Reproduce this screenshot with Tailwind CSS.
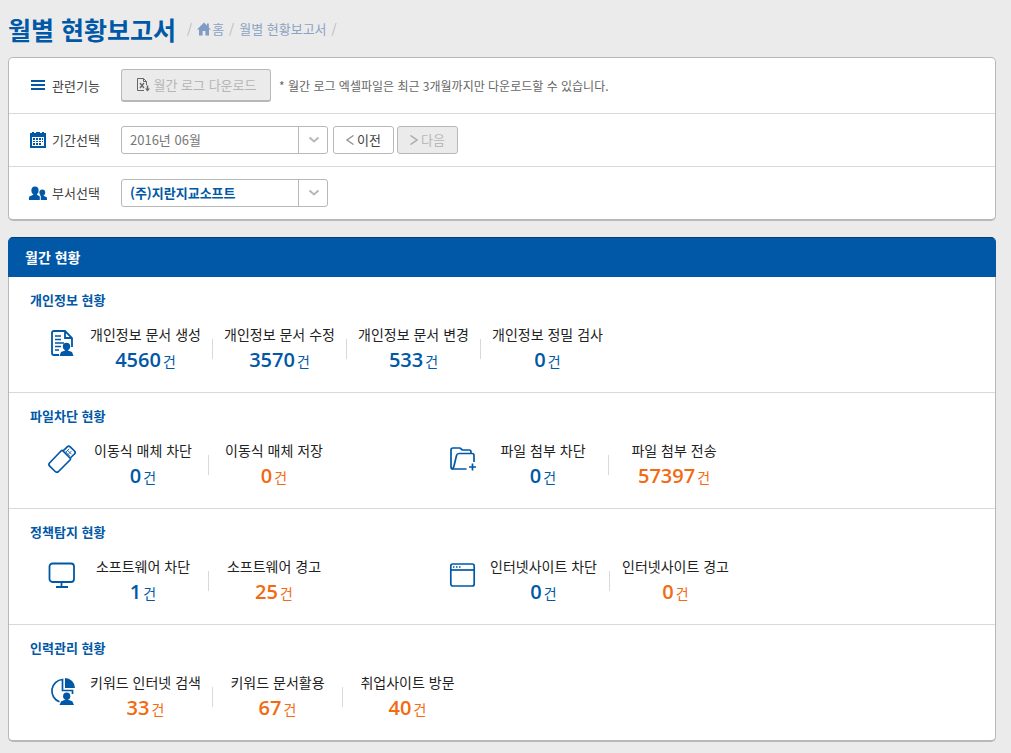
<!DOCTYPE html>
<html lang="ko">
<head>
<meta charset="utf-8">
<meta name="viewport" content="width=device-width, initial-scale=1">
<title>월별 현황보고서</title>
<script src="https://cdn.jsdelivr.net/npm/@tailwindcss/browser@4"></script>
</head>
<body class="min-h-screen bg-[#ebebeb] px-2 pb-2.5 font-['Noto_Sans_CJK_KR','Noto_Sans',sans-serif] text-[13px] leading-5 text-[#444]">
<div class="mr-[7px]">
<header class="flex h-[57px] items-center">
  <h1 class="text-[25px] leading-8 font-bold whitespace-nowrap text-[#0058a6]">월별 현황보고서</h1>
  <nav aria-label="현재 위치" class="ml-[11px] flex items-center gap-[5px] whitespace-nowrap text-[#8ba3c4]">
    <span class="text-[#b8b8b8]">/</span>
    <a href="#" class="flex items-center gap-px">
      <svg class="h-3.5 w-3.5" viewBox="0 0 14 14" fill="#7f9cc4"><path d="M7 0.5 0 7.6h2V13.5h3.6V9h2.8v4.5H12V7.600h2L11.800 5.400V1.500H10v2z"/></svg>
      <span>홈</span>
    </a>
    <span class="text-[#b8b8b8]">/</span>
    <a href="#">월별 현황보고서</a>
    <span class="text-[#b8b8b8]">/</span>
  </nav>
</header>

<main>
<form class="rounded-[5px] border border-b-2 border-[#b8b8b8] bg-white">
  <div class="flex h-14 items-center border-b border-[#d9d9d9] pl-5">
    <div class="flex w-[92px] items-center gap-[5px]">
      <svg class="h-[18px] w-[18px]" viewBox="0 0 18 18" fill="#0058a6"><path d="M2 3h14v2H2zM2 7h14v2H2zM2 11h14v2H2z"/></svg>
      <span>관련기능</span>
    </div>
    <button type="button" disabled class="flex h-[33px] w-[150px] items-center justify-center gap-1 rounded-[3px] border border-b-2 border-[#b8b8b8] bg-[#ebebeb] whitespace-nowrap text-[#b5b5b5]">
      <svg class="h-3.5 w-3.5" viewBox="0 0 14 14" fill="none" stroke="#666"><path d="M8 12.500H1.500V.5h6l3 3V7M7.500.5v3h3"/><path d="m4 5 4 5M8 5 4 10" stroke-width="1.300"/><path d="M11.500 7.500v4" stroke-width="1.600"/><path d="M9 10.500h5l-2.500 3z" fill="#666" stroke="none"/></svg>
      월간 로그 다운로드
    </button>
    <p class="ml-2 text-xs whitespace-nowrap text-[#666]">* 월간 로그 엑셀파일은 최근 3개월까지만 다운로드할 수 있습니다.</p>
  </div>

  <div class="flex h-[53px] items-center border-b border-[#d9d9d9] pl-5">
    <label for="period" class="flex w-[92px] items-center gap-[5px]">
      <svg class="h-[18px] w-[18px]" viewBox="0 0 18 18"><path fill="#0058a6" d="M1 2h2V1h2v1h2V1h4v1h2V1h2v1h2v15H1z"/><path fill="#fff" d="M3 6h12v9H3z"/><path fill="#0058a6" d="M4 7h2v2H4zM7 7h2v2H7zM10 7h2v2h-2zM4 10h2v1H4zM7 10h2v1H7zM10 10h2v1h-2zM13 7h1v2h-1zM13 10h1v1h-1zM4 12h2v2H4zM7 12h2v2H7zM10 12h2v2h-2z"/></svg>
      <span>기간선택</span>
    </label>
    <div class="relative">
      <select id="period" class="h-7 w-[207px] appearance-none rounded-[3px] border border-[#b8b8b8] bg-white pl-2 text-[#777]"><option>2016년 06월</option></select>
      <span class="pointer-events-none absolute inset-y-0 right-0 flex w-[30px] items-center justify-center border-l border-[#b8b8b8]">
        <svg class="h-2 w-3" viewBox="0 0 12 8" fill="none" stroke="#b8b8b8" stroke-width="2"><path d="m1.500 1.500 4.500 4 4.500-4"/></svg>
      </span>
    </div>
    <button type="button" class="ml-[5px] flex h-7 w-[61px] items-center justify-center gap-[3px] rounded-[3px] border border-[#b8b8b8] bg-white">
      <svg class="h-2.5 w-2" viewBox="0 0 8 10" fill="none" stroke="#999" stroke-width="1.500"><path d="M7.500.5 1 5l6.500 4.500"/></svg>이전
    </button>
    <button type="button" disabled class="ml-[3px] flex h-7 w-[61px] items-center justify-center gap-[3px] rounded-[3px] border border-[#b8b8b8] bg-[#ebebeb] text-[#b8b8b8]">
      <svg class="h-2.5 w-2" viewBox="0 0 8 10" fill="none" stroke="#aaa" stroke-width="1.500"><path d="M.5.5 7 5 .5 9.500"/></svg>다음
    </button>
  </div>

  <div class="flex h-[52px] items-center pl-5">
    <label for="dept" class="flex w-[92px] items-center gap-[5px]">
      <svg class="h-[18px] w-[18px]" viewBox="0 0 18 18" fill="#0058a6"><ellipse cx="6" cy="6.500" rx="3.600" ry="4"/><path d="M4.200 9h3.600v1.600l3 1.800V16H0v-3.200l4.200-2z"/><circle cx="13.300" cy="8.500" r="2.900"/><path d="M12.200 10.500h2.400v1.300l3.400 1.700V16h-6.200v-3.800l-.7-.7z"/></svg>
      <span>부서선택</span>
    </label>
    <div class="relative">
      <select id="dept" class="h-7 w-[207px] appearance-none rounded-[3px] border border-[#b8b8b8] bg-white pl-2 font-bold text-[#0058a6]"><option>(주)지란지교소프트</option></select>
      <span class="pointer-events-none absolute inset-y-0 right-0 flex w-[30px] items-center justify-center border-l border-[#b8b8b8]">
        <svg class="h-2 w-3" viewBox="0 0 12 8" fill="none" stroke="#b8b8b8" stroke-width="2"><path d="m1.500 1.500 4.500 4 4.500-4"/></svg>
      </span>
    </div>
  </div>
</form>

<section class="mt-4">
  <h2 class="flex h-10 items-center rounded-t-[5px] border border-b-0 border-[#0058a6] border-t-[#003f7c] bg-[#0058a6] pb-0.5 pl-4 text-sm font-bold text-white">월간 현황</h2>
  <div class="rounded-b-[5px] border border-t-0 border-b-2 border-[#b8b8b8] bg-white text-sm text-[#222]">

    <section class="border-b border-[#d9d9d9] pt-[13px] pb-[18px]">
      <h3 class="pl-[21px] text-[13px] leading-5 font-bold text-[#0058a6]">개인정보 현황</h3>
      <div class="mt-3.5 flex pl-[39px]">
        <div class="flex">
          <svg class="mt-[5px] mr-[3px] h-7 w-7" viewBox="0 0 28 28" fill="none" stroke="#0058a6" stroke-width="2"><path d="M11 26H6q-2 0-2-2V4q0-2 2-2h11l7 7v9M17 2v7h7" stroke-width="1.800"/><path d="M7 7h6M7 10.500h6M7 14h9M7 17.500h6M7 21h4" stroke-width="1.500"/><circle cx="18.500" cy="17.500" r="3.700" fill="#0058a6" stroke="none"/><path d="M17 20h3v1.500l4 1.500 1.500 4h-14l1.500-4 4-1.500z" fill="#0058a6" stroke="none"/></svg>
          <dl class="w-[133px] text-center whitespace-nowrap"><dt>개인정보 문서 생성</dt><dd class="mt-0.5 flex h-7 items-baseline justify-center gap-0.5 text-[#0058a6]"><b class="font-['Open_Sans'] text-xl leading-7 font-semibold">4560</b><span>건</span></dd></dl>
          <div class="mt-[15px] h-5 w-px bg-[#d9d9d9]"></div>
          <dl class="w-[133px] text-center whitespace-nowrap"><dt>개인정보 문서 수정</dt><dd class="mt-0.5 flex h-7 items-baseline justify-center gap-0.5 text-[#0058a6]"><b class="font-['Open_Sans'] text-xl leading-7 font-semibold">3570</b><span>건</span></dd></dl>
          <div class="mt-[15px] h-5 w-px bg-[#d9d9d9]"></div>
          <dl class="w-[133px] text-center whitespace-nowrap"><dt>개인정보 문서 변경</dt><dd class="mt-0.5 flex h-7 items-baseline justify-center gap-0.5 text-[#0058a6]"><b class="font-['Open_Sans'] text-xl leading-7 font-semibold">533</b><span>건</span></dd></dl>
          <div class="mt-[15px] h-5 w-px bg-[#d9d9d9]"></div>
          <dl class="w-[133px] text-center whitespace-nowrap"><dt>개인정보 정밀 검사</dt><dd class="mt-0.5 flex h-7 items-baseline justify-center gap-0.5 text-[#0058a6]"><b class="font-['Open_Sans'] text-xl leading-7 font-semibold">0</b><span>건</span></dd></dl>
        </div>
      </div>
    </section>

    <section class="border-b border-[#d9d9d9] pt-[13px] pb-[18px]">
      <h3 class="pl-[21px] text-[13px] leading-5 font-bold text-[#0058a6]">파일차단 현황</h3>
      <div class="mt-3.5 flex pl-[39px]">
        <div class="flex w-[400px]">
          <svg class="mt-[5px] mr-0.5 h-7 w-7" viewBox="0 0 28 28" fill="none" stroke="#0058a6" stroke-width="1.700" stroke-linejoin="round"><path d="M1.500 18 13 6q1-1 2 0l7 7q1 1 0 2L10.500 26.500q-1.700 1.500-3.300 0l-5.500-5.300q-1.500-1.700-.2-3.200z"/><path d="m15 6 4.200-4.200q1.500-1.300 3 0l4.300 4.200q1.300 1.500 0 3L22.200 13"/><path d="m19 4.800 4.500 4.500M17.300 6.500l4.500 4.500M21.200 3.800l-3.500 3.500M23.500 6 20 9.500" stroke-width=".8"/></svg>
          <dl class="w-[130px] text-center whitespace-nowrap"><dt>이동식 매체 차단</dt><dd class="mt-0.5 flex h-7 items-baseline justify-center gap-0.5 text-[#0058a6]"><b class="font-['Open_Sans'] text-xl leading-7 font-semibold">0</b><span>건</span></dd></dl>
          <div class="mt-[15px] h-5 w-px bg-[#d9d9d9]"></div>
          <dl class="w-[130px] text-center whitespace-nowrap"><dt>이동식 매체 저장</dt><dd class="mt-0.5 flex h-7 items-baseline justify-center gap-0.5 text-[#f26a11]"><b class="font-['Open_Sans'] text-xl leading-7 font-semibold">0</b><span>건</span></dd></dl>
        </div>
        <div class="flex">
          <svg class="mt-[5px] mr-0.5 h-7 w-7" viewBox="0 0 28 28" fill="none" stroke="#0058a6" stroke-width="1.700" stroke-linejoin="round"><path d="M18.500 24H5q-2 0-2-2V5q0-2 2-2h6.500q1 0 1.500.800T14.500 5H21q2 0 2 2v1"/><path d="M4 24q1.500-.5 2-3L8.500 10.500Q9 8.500 11 8.500h13q2 0 2 2V17"/><path d="M24.500 18.500v7M21 22h7"/></svg>
          <dl class="w-[130px] text-center whitespace-nowrap"><dt>파일 첨부 차단</dt><dd class="mt-0.5 flex h-7 items-baseline justify-center gap-0.5 text-[#0058a6]"><b class="font-['Open_Sans'] text-xl leading-7 font-semibold">0</b><span>건</span></dd></dl>
          <div class="mt-[15px] h-5 w-px bg-[#d9d9d9]"></div>
          <dl class="w-[130px] text-center whitespace-nowrap"><dt>파일 첨부 전송</dt><dd class="mt-0.5 flex h-7 items-baseline justify-center gap-0.5 text-[#f26a11]"><b class="font-['Open_Sans'] text-xl leading-7 font-semibold">57397</b><span>건</span></dd></dl>
        </div>
      </div>
    </section>

    <section class="border-b border-[#d9d9d9] pt-[13px] pb-[18px]">
      <h3 class="pl-[21px] text-[13px] leading-5 font-bold text-[#0058a6]">정책탐지 현황</h3>
      <div class="mt-3.5 flex pl-[39px]">
        <div class="flex w-[400px]">
          <svg class="mt-[5px] mr-0.5 h-7 w-7" viewBox="0 0 28 28" fill="none" stroke="#0058a6" stroke-width="1.800"><rect x="1.500" y="2.500" width="24.500" height="18.500" rx="3"/><path d="M13.500 21v5M8 26h12"/></svg>
          <dl class="w-[130px] text-center whitespace-nowrap"><dt>소프트웨어 차단</dt><dd class="mt-0.5 flex h-7 items-baseline justify-center gap-0.5 text-[#0058a6]"><b class="font-['Open_Sans'] text-xl leading-7 font-semibold">1</b><span>건</span></dd></dl>
          <div class="mt-[15px] h-5 w-px bg-[#d9d9d9]"></div>
          <dl class="w-[130px] text-center whitespace-nowrap"><dt>소프트웨어 경고</dt><dd class="mt-0.5 flex h-7 items-baseline justify-center gap-0.5 text-[#f26a11]"><b class="font-['Open_Sans'] text-xl leading-7 font-semibold">25</b><span>건</span></dd></dl>
        </div>
        <div class="flex">
          <svg class="mt-[5px] mr-0.5 h-7 w-7" viewBox="0 0 28 28" fill="none" stroke="#0058a6" stroke-width="1.700"><rect x="2.800" y="3" width="23.400" height="22" rx="2"/><path d="M3 9h23"/><path d="M5 6h1.500M8 6h1.500M11 6h1.500" stroke-width="1.300"/></svg>
          <dl class="w-[131px] text-center whitespace-nowrap"><dt>인터넷사이트 차단</dt><dd class="mt-0.5 flex h-7 items-baseline justify-center gap-0.5 text-[#0058a6]"><b class="font-['Open_Sans'] text-xl leading-7 font-semibold">0</b><span>건</span></dd></dl>
          <div class="mt-[15px] h-5 w-px bg-[#d9d9d9]"></div>
          <dl class="w-[131px] text-center whitespace-nowrap"><dt>인터넷사이트 경고</dt><dd class="mt-0.5 flex h-7 items-baseline justify-center gap-0.5 text-[#f26a11]"><b class="font-['Open_Sans'] text-xl leading-7 font-semibold">0</b><span>건</span></dd></dl>
        </div>
      </div>
    </section>

    <section class="pt-[13px] pb-[18px]">
      <h3 class="pl-[21px] text-[13px] leading-5 font-bold text-[#0058a6]">인력관리 현황</h3>
      <div class="mt-3.5 flex pl-[39px]">
        <div class="flex">
          <svg class="mt-[5px] mr-[3px] h-7 w-7" viewBox="0 0 28 28" fill="none" stroke="#0058a6" stroke-width="1.700"><path d="M11.500 24.800A11.500 11.500 0 0 1 14.500 2.500V13.500H24.500V17"/><path d="M17 1a10 10 0 0 1 10 10H17z" fill="#0058a6" stroke="none"/><circle cx="18.700" cy="19.200" r="3.600" fill="#0058a6" stroke="none"/><path d="M17.300 21.500h2.800v1.300l4.200 1.400L26 28H11.500l1.700-3.800 4.100-1.400z" fill="#0058a6" stroke="none"/></svg>
          <dl class="w-[133px] text-center whitespace-nowrap"><dt>키워드 인터넷 검색</dt><dd class="mt-0.5 flex h-7 items-baseline justify-center gap-0.5 text-[#f26a11]"><b class="font-['Open_Sans'] text-xl leading-7 font-semibold">33</b><span>건</span></dd></dl>
          <div class="mt-[15px] h-5 w-px bg-[#d9d9d9]"></div>
          <dl class="w-[129px] text-center whitespace-nowrap"><dt>키워드 문서활용</dt><dd class="mt-0.5 flex h-7 items-baseline justify-center gap-0.5 text-[#f26a11]"><b class="font-['Open_Sans'] text-xl leading-7 font-semibold">67</b><span>건</span></dd></dl>
          <div class="mt-[15px] h-5 w-px bg-[#d9d9d9]"></div>
          <dl class="w-[129px] text-center whitespace-nowrap"><dt>취업사이트 방문</dt><dd class="mt-0.5 flex h-7 items-baseline justify-center gap-0.5 text-[#f26a11]"><b class="font-['Open_Sans'] text-xl leading-7 font-semibold">40</b><span>건</span></dd></dl>
        </div>
      </div>
    </section>
  </div>
</section>
</main>
</div>
</body>
</html>
